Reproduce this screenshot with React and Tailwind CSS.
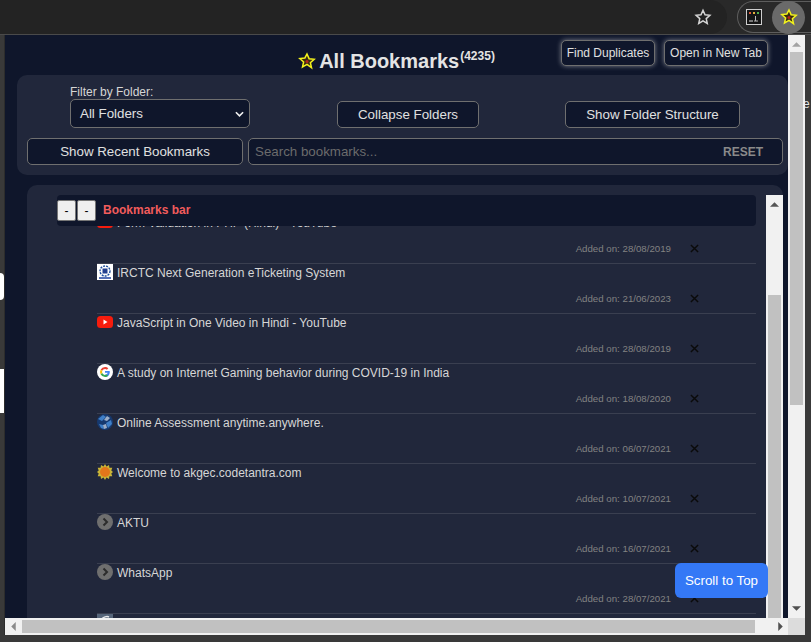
import React from 'react';

const StarIcon = ({ className }) => (
  <svg viewBox="0 0 24 24" className={className}>
    <path d="M12 2.6l2.800 6.300 6.800.7-5.100 4.600 1.500 6.700L12 16.500l-6 3.400 1.500-6.700-5.100-4.600 6.800-.7z" fill="#3a2a10" stroke="#f3f31c" strokeWidth="2" />
    <circle cx="12" cy="12.500" r="2" fill="#b3261e" />
  </svg>
);

const YouTubeIcon = () => (
  <svg viewBox="0 0 16 16" className="w-4 h-4 shrink-0">
    <rect x="0" y="2" width="16" height="12" rx="3.500" fill="#f61c0d" />
    <path d="M6.500 5.500l4 2.500-4 2.500z" fill="#fff" />
  </svg>
);

const IrctcIcon = () => (
  <svg viewBox="0 0 16 16" className="w-4 h-4 shrink-0">
    <rect width="16" height="16" fill="#fff" />
    <circle cx="8" cy="7" r="5" fill="none" stroke="#1d4e9e" strokeWidth="1.400" strokeDasharray="2 1" />
    <rect x="5.500" y="4.500" width="5" height="5" fill="#23408f" />
    <rect x="2" y="13" width="12" height="2" fill="#5570b8" />
  </svg>
);

const GoogleIcon = () => (
  <svg viewBox="0 0 16 16" className="w-4 h-4 shrink-0">
    <circle cx="8" cy="8" r="8" fill="#fff" />
    <path d="M12.600 6.900H8v1.900h2.700c-.3 1.200-1.300 2-2.700 2v2.200c2.700 0 4.800-1.900 4.800-5 0-.4-.1-.8-.2-1.100z" fill="#4285f4" />
    <path d="M3.600 5.700A5 5 0 0 1 8 3c1.300 0 2.500.5 3.300 1.300L9.900 5.700C9.400 5.300 8.700 5 8 5 6.800 5 5.800 5.700 5.300 6.800z" fill="#ea4335" />
    <path d="M5.300 6.800 3.600 5.700a5 5 0 0 0 0 4.600l1.700-1.200a3 3 0 0 1 0-2.300z" fill="#fbbc05" />
    <path d="M3.600 10.300A5 5 0 0 0 8 13c1.300 0 2.400-.4 3.200-1.200L9.600 10.400c-.4.300-1 .5-1.600.5-1.300 0-2.300-.8-2.700-1.800z" fill="#34a853" />
  </svg>
);

const GlobeIcon = () => (
  <svg viewBox="0 0 16 16" className="w-4 h-4 shrink-0">
    <circle cx="8" cy="8" r="8" fill="#16396f" />
    <path d="M1 5l5-4 3 2-4 4zM9 9l5-3 1 4-4 4zM2 10l4 1 1 4-3-1z" fill="#3f7fc8" />
    <path d="M7 6l3-4 3 2-3 3zM6 11l3-1 1 4-3 1z" fill="#c9d6e6" opacity=".75" />
  </svg>
);

const SunIcon = () => (
  <svg viewBox="0 0 16 16" className="w-4 h-4 shrink-0">
    <path d="M8 0l1.500 2.500L12 1l.4 2.800 2.900-.1-1 2.700L16 8l-1.700 1.600 1 2.700-2.900-.1L12 15l-2.500-1.500L8 16l-1.500-2.500L4 15l-.4-2.800-2.900.1 1-2.700L0 8l1.700-1.600-1-2.700 2.900.1L4 1l2.500 1.500z" fill="#c9b437" />
    <circle cx="8" cy="8" r="5" fill="#e2761b" />
  </svg>
);

const ChevronIcon = () => (
  <svg viewBox="0 0 16 16" className="w-4 h-4 shrink-0">
    <circle cx="8" cy="8" r="8" fill="#6f6f6f" />
    <path d="M6.500 4.500L10 8l-3.500 3.500" fill="none" stroke="#2c2c2c" strokeWidth="2" />
  </svg>
);

const ClippedIcon = () => (
  <svg viewBox="0 0 16 16" className="w-4 h-4 shrink-0">
    <rect width="16" height="16" fill="#56657a" />
    <path d="M5 5c1-2 5-3 7-2M5 4v4" fill="none" stroke="#e5e7eb" strokeWidth="1.500" />
  </svg>
);

const ExtensionIcon = () => (
  <svg viewBox="0 0 16 16" className="w-4 h-4 shrink-0 ml-[8px]">
    <rect x=".5" y=".5" width="15" height="15" fill="#151515" stroke="#cfcfcf" />
    <rect x="3" y="3" width="2" height="2" fill="#e05a3a" />
    <rect x="7" y="3" width="2" height="2" fill="#e0b03a" />
    <rect x="11" y="3" width="2" height="2" fill="#4fb04f" />
    <path d="M3 12h4" stroke="#dddddd" />
    <path d="M9.500 7v5M8 12h4" stroke="#bbbbbb" />
  </svg>
);

const bookmarks = [
  { title: 'Form Validation in PHP (Hindi) - YouTube', date: '28/08/2019', icon: <YouTubeIcon /> },
  { title: 'IRCTC Next Generation eTicketing System', date: '21/06/2023', icon: <IrctcIcon /> },
  { title: 'JavaScript in One Video in Hindi - YouTube', date: '28/08/2019', icon: <YouTubeIcon /> },
  { title: 'A study on Internet Gaming behavior during COVID-19 in India', date: '18/08/2020', icon: <GoogleIcon /> },
  { title: 'Online Assessment anytime.anywhere.', date: '06/07/2021', icon: <GlobeIcon /> },
  { title: 'Welcome to akgec.codetantra.com', date: '10/07/2021', icon: <SunIcon /> },
  { title: 'AKTU', date: '16/07/2021', icon: <ChevronIcon /> },
  { title: 'WhatsApp', date: '28/07/2021', icon: <ChevronIcon /> },
  { title: '', date: '', icon: <ClippedIcon /> },
];

const darkBtn = 'h-[27px] rounded-[5px] border border-[#6f6f6f] bg-[#0f162b] text-[13.33px] text-[#e0e0e0] flex items-center justify-center';
const smallBtn = 'h-[26px] rounded-[5px] border border-[#6f6f6f] bg-[#0f162b] text-[12px] text-[#e0e0e0] flex items-center justify-center shadow-[0_0_5px_rgba(255,255,255,0.45)]';

const Arrow = ({ dir, className }) => {
  const d = { up: 'M0 5L5 0l5 5z', down: 'M0 0l5 5 5-5z', left: 'M5 0L0 5l5 5z', right: 'M0 0l5 5-5 5z' }[dir];
  const box = dir === 'up' || dir === 'down' ? '0 0 10 5' : '0 0 5 10';
  return (
    <svg viewBox={box} className={className}>
      <path d={d} fill="currentColor" />
    </svg>
  );
};

const BookmarkRow = ({ item }) => (
  <div className="h-[50px] border-b border-[#3a3f50] shrink-0 flex flex-col">
    <div className="flex items-center gap-1 h-4">
      {item.icon}
      <span className="mt-[2px] text-[12px] text-[#d6d6d6] leading-4">{item.title}</span>
    </div>
    {item.date && (
      <div className="flex items-center mt-[10px] h-4">
        <span className="ml-auto mt-[2px] text-[9.7px] text-[#828282]">Added on: {item.date}</span>
        <span className="ml-[18px] mr-[57px] w-[10px] flex justify-center">
          <svg viewBox="0 0 10 10" className="w-[9px] h-[9px]">
            <path d="M1 1l8 8M9 1l-8 8" stroke="#0a0a0a" strokeWidth="1.600" />
          </svg>
        </span>
      </div>
    )}
  </div>
);

export default function App() {
  return (
    <div className="w-[811px] h-[642px] overflow-hidden bg-[#393939] flex flex-col font-['Liberation_Sans',sans-serif]">
      {/* Browser toolbar */}
      <div className="h-[35px] bg-[#292929] flex items-center shrink-0 border-b border-[#4a4a4a]">
        <div className="flex-1 h-full bg-[#232323] rounded-r-[17px] mr-[10px] flex items-center justify-end pr-[15px]">
          <svg viewBox="0 0 24 24" className="w-[18px] h-[18px]">
            <path d="M12 3l2.700 6 6.500.7-4.900 4.400 1.400 6.400L12 17.200l-5.700 3.300 1.400-6.400-4.900-4.400 6.500-.7z" fill="none" stroke="#d5d5d5" strokeWidth="2" />
          </svg>
        </div>
        <div className="w-[74px] h-[32px] rounded-l-[16px] border border-[#5d5d5d] border-r-0 flex items-center">
          <ExtensionIcon />
          <div className="w-[33px] h-[33px] rounded-full bg-[#6a6a6a] ml-[10px] flex items-center justify-center shrink-0">
            <StarIcon className="w-[18px] h-[18px]" />
          </div>
        </div>
      </div>

      <div className="flex h-[600px] shrink-0">
        {/* Page showing behind the popup */}
        <div className="w-[5px] shrink-0 border-r border-[#2c2c2c]">
          <div className="w-[4px] h-[27px] mt-[238px] bg-white rounded-r-full" />
          <div className="w-[4px] h-[44px] mt-[69px] bg-white" />
        </div>

        {/* Popup */}
        <div className="w-[800px] shrink-0 flex flex-col relative">
          <div className="flex h-[583px] shrink-0">
            <div className="w-[783px] shrink-0 bg-[#0f162b] overflow-hidden relative">
              {/* Header */}
              <div className="h-[40px] relative">
                <div className="flex items-center justify-center h-full pt-[12px]">
                  <StarIcon className="w-[18px] h-[18px] mr-[3px]" />
                  <span className="text-[20px] font-bold text-[#e4e4e4]">All Bookmarks</span>
                  <sup className="text-[12px] font-bold text-[#e4e4e4] relative top-[-5px] ml-[1px]">(4235)</sup>
                </div>
                <div className="absolute top-[5px] right-[20px] flex gap-[9px]">
                  <div className={`${smallBtn} w-[94px]`}>Find Duplicates</div>
                  <div className={`${smallBtn} w-[104px]`}>Open in New Tab</div>
                </div>
              </div>

              {/* Filters */}
              <div className="ml-[12px] w-[771px] h-[100px] bg-[#21273b] rounded-[10px] pt-[10px] pl-[10px]">
                <div className="flex items-end h-[43px]">
                  <div className="ml-[43px] w-[180px]">
                    <div className="text-[12px] leading-[13px] text-[#d6d6d6]">Filter by Folder:</div>
                    <div className={`${darkBtn} !h-[29px] !justify-between pl-[9px] pr-[5px]`}>
                      <span>All Folders</span>
                      <svg viewBox="0 0 10 6" className="w-[9px] h-[6px]">
                        <path d="M1 1l4 4 4-4" fill="none" stroke="#f0f0f0" strokeWidth="1.800" />
                      </svg>
                    </div>
                  </div>
                  <div className={`${darkBtn} ml-[87px] w-[142px]`}>Collapse Folders</div>
                  <div className={`${darkBtn} ml-[86px] w-[175px]`}>Show Folder Structure</div>
                </div>
                <div className="flex mt-[10px] gap-[5px]">
                  <div className={`${darkBtn} w-[216px]`}>Show Recent Bookmarks</div>
                  <div className={`${darkBtn} w-[535px] !justify-between pl-[6px] pr-[19px]`}>
                    <span className="text-[#6b6b6b]">Search bookmarks...</span>
                    <span className="text-[12px] font-bold text-[#8a8a8a]">RESET</span>
                  </div>
                </div>
              </div>

              {/* Bookmark list */}
              <div className="ml-[22px] w-[756px] h-[433px] mt-[10px] bg-[#21273b] rounded-t-[10px] pt-[10px] flex">
                <div className="ml-[30px] w-[699px] flex flex-col overflow-hidden">
                  <div className="h-[31px] bg-[#0f162b] rounded-[4px] flex items-center shrink-0 relative z-10">
                    <div className="flex gap-[1px]">
                      <div className="w-[19px] h-[21px] bg-[#efefef] border border-[#767676] rounded-[2px] text-[12px] text-black flex items-center justify-center">-</div>
                      <div className="w-[19px] h-[21px] bg-[#efefef] border border-[#767676] rounded-[2px] text-[12px] text-black flex items-center justify-center">-</div>
                    </div>
                    <span className="ml-[7px] mb-[2px] text-[12px] font-bold text-[#f25c5c]">Bookmarks bar</span>
                  </div>
                  <div className="pl-[40px] mt-[-12px] flex flex-col">
                    {bookmarks.map((item, i) => (
                      <BookmarkRow key={i} item={item} />
                    ))}
                  </div>
                </div>
                {/* Inner scrollbar */}
                <div className="ml-[10px] w-[17px] bg-[#f1f1f1] flex flex-col items-center shrink-0">
                  <Arrow dir="up" className="w-[9px] h-[5px] mt-[7px] text-[#555555]" />
                  <div className="w-[13px] flex-1 bg-[#c1c1c1] mt-[88px]" />
                </div>
              </div>

              <div className="absolute left-[670px] top-[528px] w-[93px] h-[35px] rounded-[6px] bg-[#3478f6] text-white text-[13.33px] flex items-center justify-center">Scroll to Top</div>
            </div>

            {/* Outer scrollbar */}
            <div className="w-[17px] bg-[#f1f1f1] flex flex-col items-center shrink-0">
              <Arrow dir="up" className="w-[9px] h-[5px] mt-[7px] text-[#a3a3a3]" />
              <div className="w-[13px] h-[353px] bg-[#c1c1c1] mt-[5px]" />
              <Arrow dir="down" className="w-[9px] h-[5px] mt-auto mb-[7px] text-[#505050]" />
            </div>
          </div>

          {/* Outer horizontal scrollbar */}
          <div className="h-[17px] flex shrink-0 bg-[#f1f1f1] items-center">
            <Arrow dir="left" className="w-[5px] h-[9px] ml-[6px] text-[#8a8a8a]" />
            <div className="w-[733px] h-[13px] bg-[#c1c1c1] ml-[6px]" />
            <Arrow dir="right" className="w-[5px] h-[9px] ml-[23px] text-[#505050]" />
            <div className="ml-auto w-[17px] h-[17px] bg-[#dcdcdc]" />
          </div>
        </div>

        <div className="w-[6px] shrink-0 overflow-hidden">
          <div className="mt-[62px] ml-[-2px] text-[12px] leading-[14px] text-[#e5e5e5]">e</div>
        </div>
      </div>
    </div>
  );
}
